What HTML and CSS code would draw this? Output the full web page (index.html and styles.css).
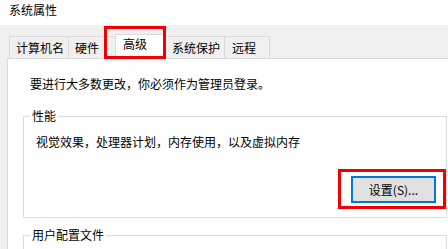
FILE: index.html
```html
<!DOCTYPE html>
<html lang="zh-CN">
<head>
<meta charset="utf-8">
<title>系统属性</title>
<link rel="stylesheet" href="styles.css">
</head>
<body>
<div class="window">
  <div class="titlebar">系统属性</div>
  <div class="client">
    <div class="tabs">
      <div class="tab">计算机名</div>
      <div class="tab">硬件</div>
      <div class="tab tab-active">高级<span class="mark mark-tab"></span></div>
      <div class="tab">系统保护</div>
      <div class="tab tab-last">远程</div>
    </div>
    <div class="panel">
      <p class="note">要进行大多数更改，你必须作为管理员登录。</p>
      <fieldset class="group">
        <legend class="group-title">性能</legend>
        <p class="group-text">视觉效果，处理器计划，内存使用，以及虚拟内存</p>
        <div class="actions">
          <button class="btn">设置(S)...<span class="mark mark-btn"></span></button>
        </div>
      </fieldset>
      <fieldset class="group group-next">
        <legend class="group-title">用户配置文件</legend>
      </fieldset>
    </div>
  </div>
</div>
</body>
</html>
```

FILE: styles.css
```css
* { box-sizing: border-box; }

html, body {
  margin: 0;
  padding: 0;
  width: 448px;
  height: 249px;
  overflow: hidden;
  background: #f0f0f0;
}

body {
  font-family: "Noto Sans CJK SC", "Noto Sans", sans-serif;
  font-size: 12px;
  color: #000;
}

.window {
  width: 448px;
  height: 249px;
  overflow: hidden;
}

.titlebar {
  height: 25px;
  background: #fff;
  padding: 2px 0 0 9px;
  line-height: 16px;
}

.client {
  background: #f0f0f0;
}

.tabs {
  display: flex;
  align-items: flex-end;
  height: 33px;
  margin-left: 9px;
}

.tab {
  height: 22px;
  min-width: 47px;
  padding: 0 4px 0 6px;
  line-height: 21px;
  border-top: 1px solid #d9d9d9;
  border-left: 1px solid #d9d9d9;
  background: #f0f0f0;
  white-space: nowrap;
}

.tab-last {
  min-width: 46px;
  padding-left: 7px;
  border-right: 1px solid #d9d9d9;
}

.tab-active {
  position: relative;
  z-index: 1;
  width: 51px;
  height: 25px;
  margin-bottom: -1px;
  padding-left: 7px;
  line-height: 18px;
  background: #fff;
  border-right: 1px solid #d9d9d9;
}

.tab-active + .tab {
  border-left: none;
}

.mark {
  position: absolute;
  border: 3px solid #f00000;
  pointer-events: none;
}

.mark-tab {
  left: -12px;
  top: -9px;
  width: 62px;
  height: 33px;
}

.panel {
  width: 470px;
  height: 200px;
  margin-left: 7px;
  background: #fff;
  border: 1px solid #d9d9d9;
  padding: 0 0 0 15px;
}

.note {
  margin: 17px 0 0 7px;
  line-height: 16px;
}

.group {
  width: 424px;
  margin: 16px 0 0 0;
  padding: 0 10px 14px 0;
  border: 1px solid #dcdcdc;
  min-inline-size: 0;
}

.group-title {
  margin-left: 6px;
  padding: 0 2px;
  line-height: 16px;
}

.group-text {
  margin: 10px 0 0 12px;
  line-height: 16px;
}

.actions {
  display: flex;
  justify-content: flex-end;
  margin-top: 26px;
}

.btn {
  position: relative;
  width: 85px;
  height: 27px;
  padding: 0;
  font: inherit;
  color: #000;
  background: #e1e1e1;
  border: 2px solid #0078d7;
  line-height: 21px;
}

.mark-btn {
  left: -15px;
  top: -9px;
  width: 108px;
  height: 40px;
}

.group-next {
  margin-top: 9px;
  height: 40px;
  padding-bottom: 0;
}
```
